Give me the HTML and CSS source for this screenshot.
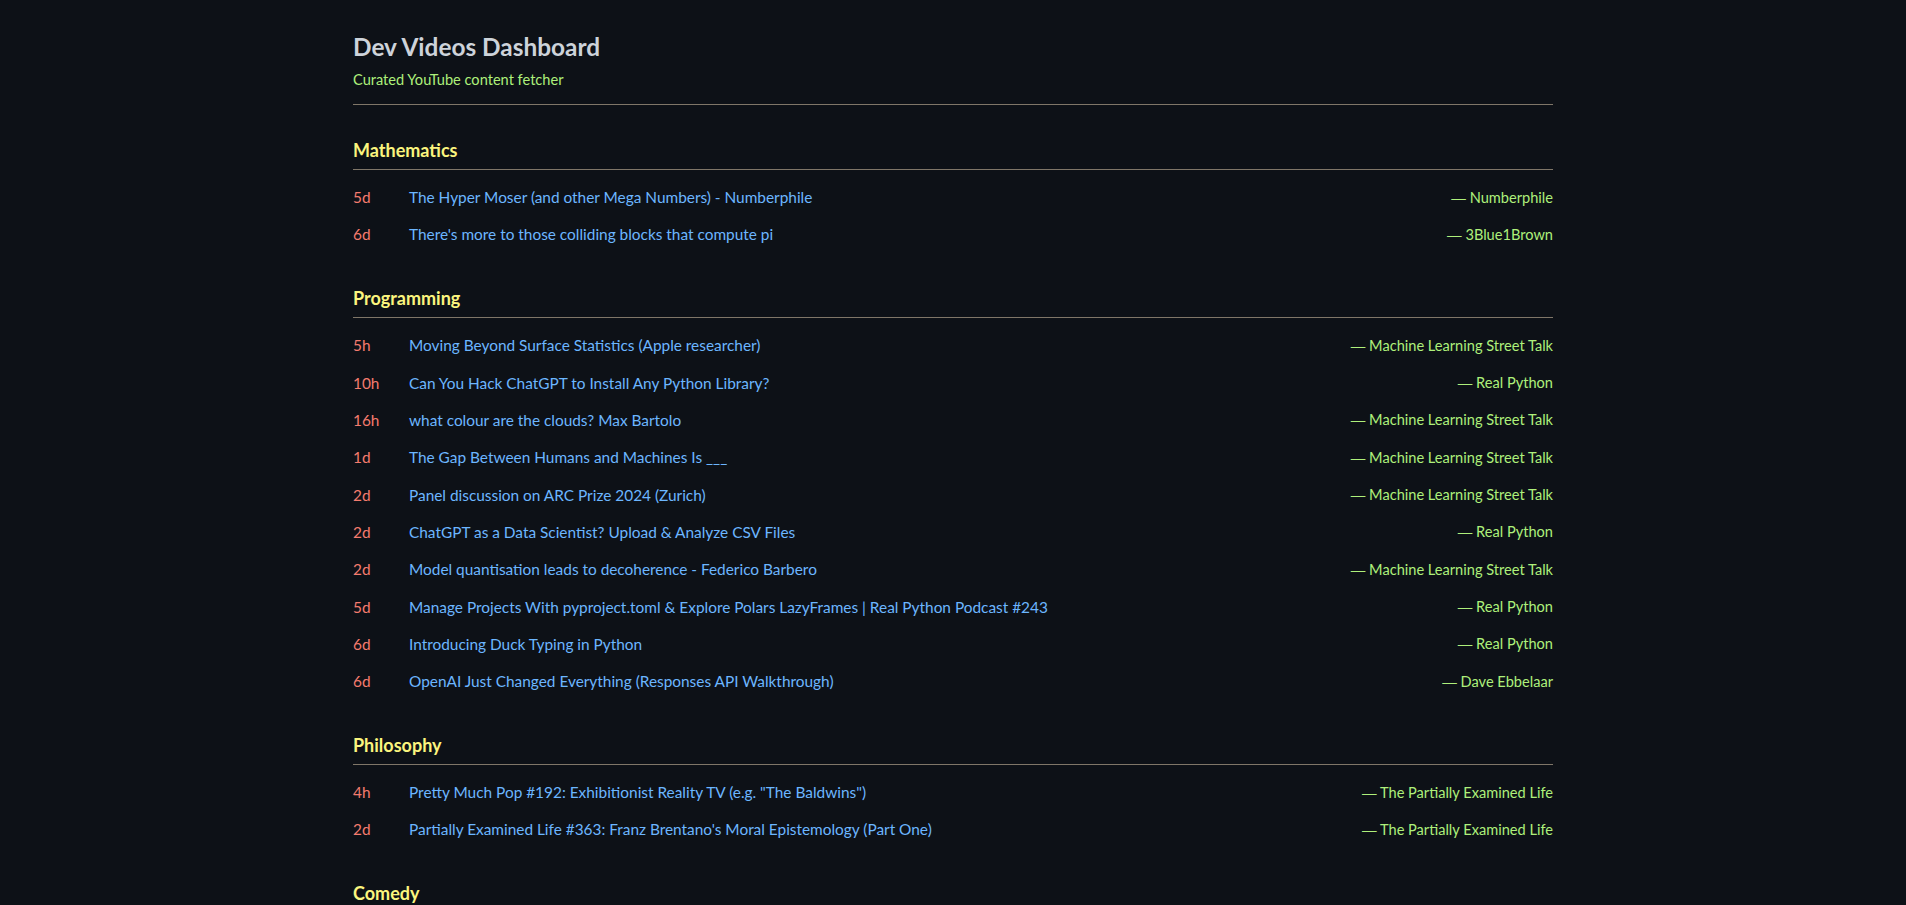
FILE: index.html
```html
<!DOCTYPE html>
<html lang="en">
<head>
<meta charset="utf-8">
<title>Dev Videos Dashboard</title>
<link rel="stylesheet" href="styles.css">
</head>
<body>
<div class="container">
  <header class="header">
    <h1 class="title">Dev Videos Dashboard</h1>
    <p class="subtitle">Curated YouTube content fetcher</p>
  </header>

  <section class="section">
    <h2 class="section-title">Mathematics</h2>
    <ul class="videos">
      <li class="video"><span class="age">5d</span><a class="vtitle" href="#">The Hyper Moser (and other Mega Numbers) - Numberphile</a><span class="channel"><span class="dash">—</span> Numberphile</span></li>
      <li class="video"><span class="age">6d</span><a class="vtitle" href="#">There's more to those colliding blocks that compute pi</a><span class="channel"><span class="dash">—</span> 3Blue1Brown</span></li>
    </ul>
  </section>

  <section class="section">
    <h2 class="section-title">Programming</h2>
    <ul class="videos">
      <li class="video"><span class="age">5h</span><a class="vtitle" href="#">Moving Beyond Surface Statistics (Apple researcher)</a><span class="channel"><span class="dash">—</span> Machine Learning Street Talk</span></li>
      <li class="video"><span class="age">10h</span><a class="vtitle" href="#">Can You Hack ChatGPT to Install Any Python Library?</a><span class="channel"><span class="dash">—</span> Real Python</span></li>
      <li class="video"><span class="age">16h</span><a class="vtitle" href="#">what colour are the clouds? Max Bartolo</a><span class="channel"><span class="dash">—</span> Machine Learning Street Talk</span></li>
      <li class="video"><span class="age">1d</span><a class="vtitle" href="#">The Gap Between Humans and Machines Is ___</a><span class="channel"><span class="dash">—</span> Machine Learning Street Talk</span></li>
      <li class="video"><span class="age">2d</span><a class="vtitle" href="#">Panel discussion on ARC Prize 2024 (Zurich)</a><span class="channel"><span class="dash">—</span> Machine Learning Street Talk</span></li>
      <li class="video"><span class="age">2d</span><a class="vtitle" href="#">ChatGPT as a Data Scientist? Upload &amp; Analyze CSV Files</a><span class="channel"><span class="dash">—</span> Real Python</span></li>
      <li class="video"><span class="age">2d</span><a class="vtitle" href="#">Model quantisation leads to decoherence - Federico Barbero</a><span class="channel"><span class="dash">—</span> Machine Learning Street Talk</span></li>
      <li class="video"><span class="age">5d</span><a class="vtitle" href="#">Manage Projects With pyproject.toml &amp; Explore Polars LazyFrames | Real Python Podcast #243</a><span class="channel"><span class="dash">—</span> Real Python</span></li>
      <li class="video"><span class="age">6d</span><a class="vtitle" href="#">Introducing Duck Typing in Python</a><span class="channel"><span class="dash">—</span> Real Python</span></li>
      <li class="video"><span class="age">6d</span><a class="vtitle" href="#">OpenAI Just Changed Everything (Responses API Walkthrough)</a><span class="channel"><span class="dash">—</span> Dave Ebbelaar</span></li>
    </ul>
  </section>

  <section class="section">
    <h2 class="section-title">Philosophy</h2>
    <ul class="videos">
      <li class="video"><span class="age">4h</span><a class="vtitle" href="#">Pretty Much Pop #192: Exhibitionist Reality TV (e.g. "The Baldwins")</a><span class="channel"><span class="dash">—</span> The Partially Examined Life</span></li>
      <li class="video"><span class="age">2d</span><a class="vtitle" href="#">Partially Examined Life #363: Franz Brentano's Moral Epistemology (Part One)</a><span class="channel"><span class="dash">—</span> The Partially Examined Life</span></li>
    </ul>
  </section>

  <section class="section">
    <h2 class="section-title">Comedy</h2>
    <ul class="videos">
      <li class="video"><span class="age">1d</span><a class="vtitle" href="#">Stand-up special highlights</a><span class="channel"><span class="dash">—</span> Comedy Central</span></li>
    </ul>
  </section>
</div>
</body>
</html>
```

FILE: styles.css
```css
* { box-sizing: border-box; }

html, body {
  margin: 0;
  padding: 0;
  background: #0d1117;
}

body {
  font-family: "Lato", "Liberation Sans", sans-serif;
  color: #c9d1d9;
}

.container {
  max-width: 1200px;
  margin: 0 auto;
  padding: 31px 0 40px;
}

.header {
  border-bottom: 1px solid #7f7668;
  padding-bottom: 15px;
}

.title {
  margin: 0;
  font-size: 24.4px;
  line-height: 32px;
  font-weight: 700;
  color: #cdd3da;
}

.subtitle {
  margin: 7px 0 0;
  font-size: 14.6px;
  line-height: 19px;
  color: #aef07b;
}

.section {
  margin-top: 33px;
}

.section-title {
  margin: 0;
  padding-bottom: 7px;
  border-bottom: 1px solid #7f7668;
  font-size: 18px;
  line-height: 24px;
  font-weight: 700;
  color: #fbf57e;
}

.videos {
  list-style: none;
  margin: 8.5px 0 0;
  padding: 0;
}

.video {
  display: grid;
  grid-template-columns: 56px 1fr auto;
  align-items: center;
  height: 37.33px;
  font-size: 15.4px;
}

.age {
  color: #f47b6e;
}

.vtitle {
  color: #6cb6ff;
  text-decoration: none;
}

.channel {
  color: #aef07b;
  font-size: 14.6px;
  text-align: right;
}

.dash {
  font-family: "Liberation Sans", sans-serif;
}
```
